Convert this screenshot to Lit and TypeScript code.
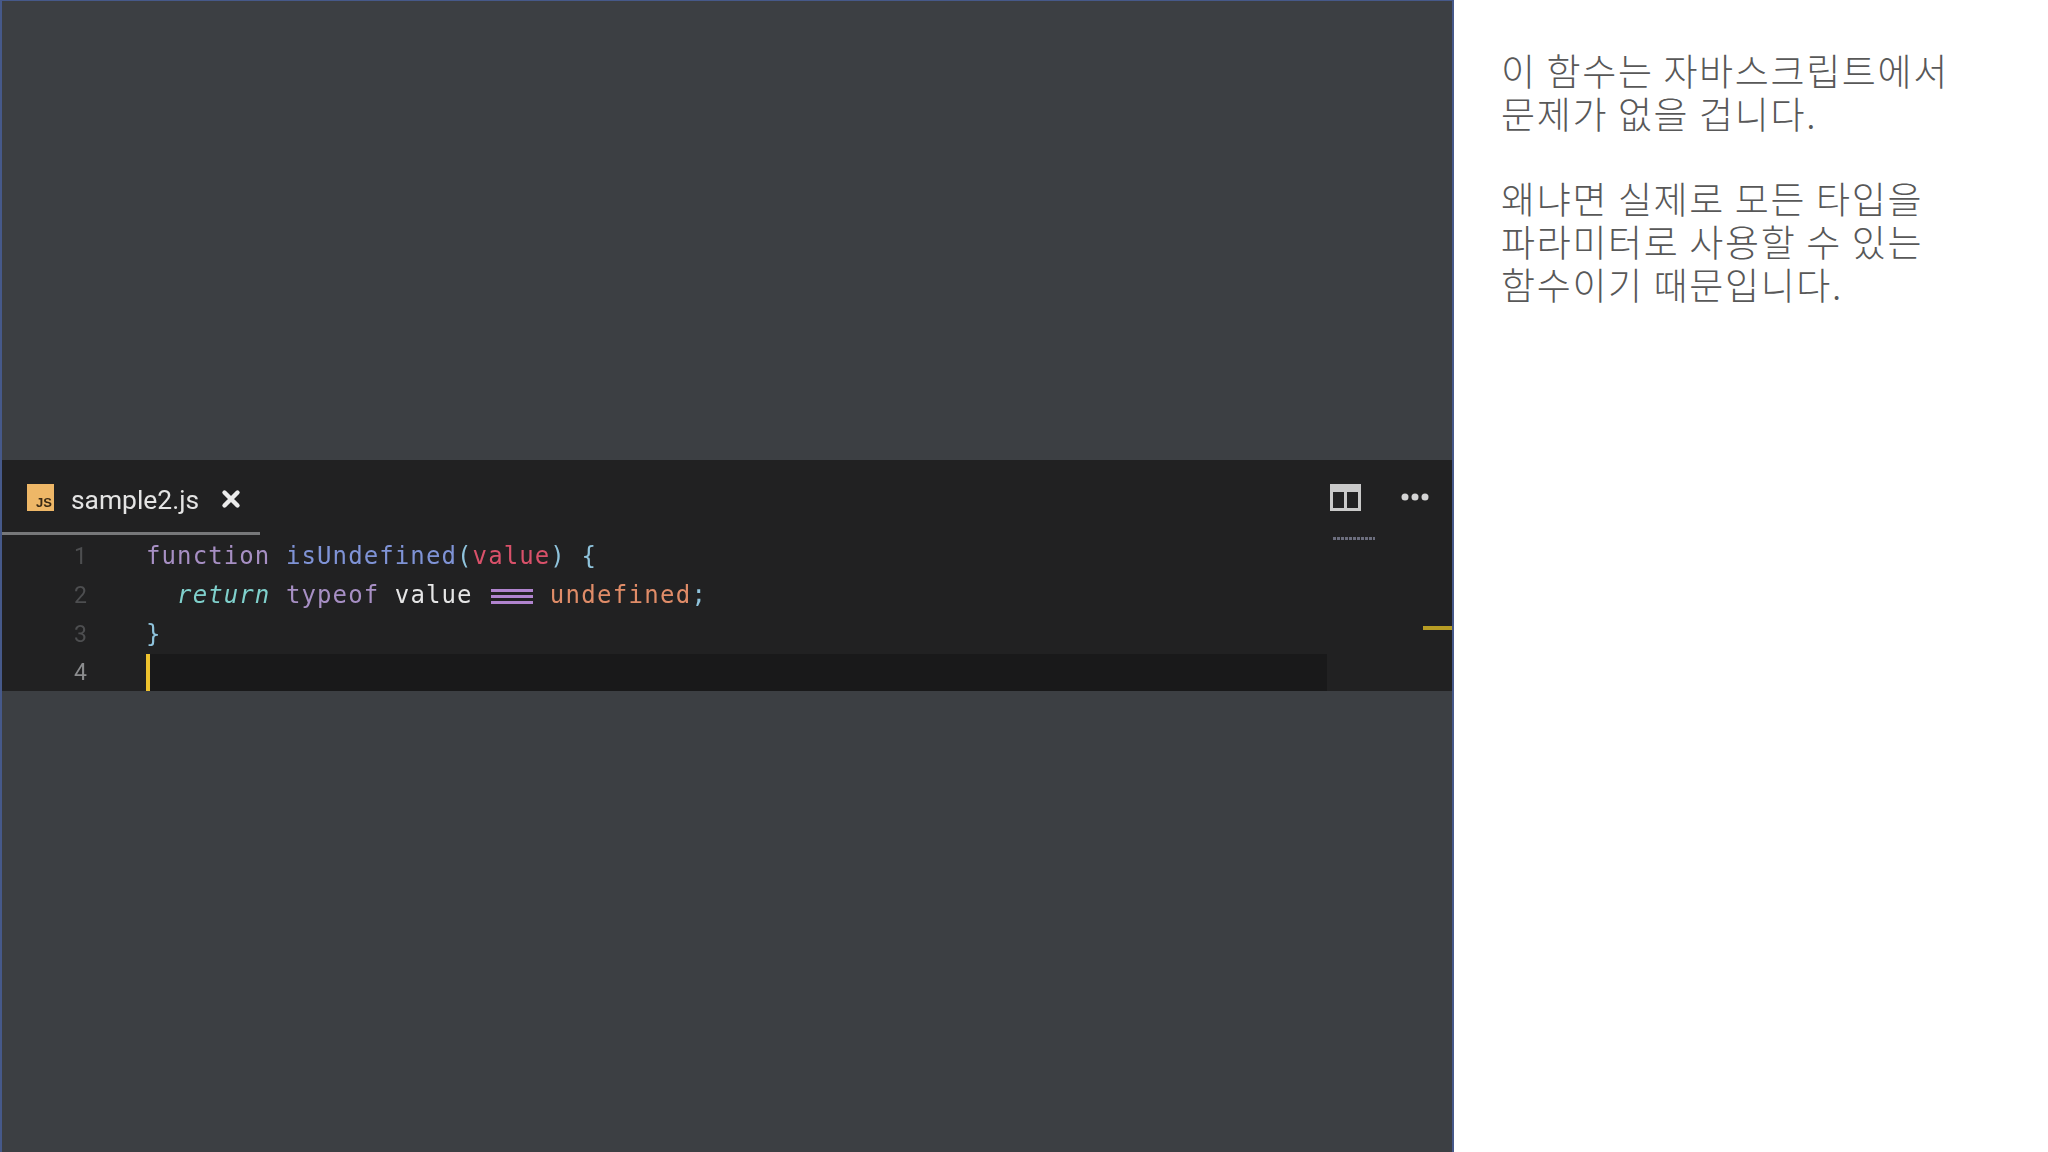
import { LitElement, html, css } from "lit";
import { customElement } from "lit/decorators.js";

@customElement("app-root")
export class AppRoot extends LitElement {
  static styles = css`
    :host { display: block; width: 2048px; height: 1152px; overflow: hidden; background: #fff; }
    .page { display: grid; grid-template-columns: 1454px 1fr; height: 1152px; }
    .video {
      display: flex; flex-direction: column; justify-content: flex-start;
      background: #3c3f43; border-left: 2px solid #46598a; border-right: 2px solid #46598a;
      border-top: 1px solid #46598a; box-sizing: border-box; height: 1152px;
    }
    .spacer { height: 459px; flex: none; }
    .editor { position: relative; height: 231px; flex: none; background: #212122; filter: blur(0.6px); }
    .tabbar { height: 73px; display: flex; align-items: center; padding: 6px 23px 0 25px; box-sizing: border-box; position: relative; }
    .jsicon {
      width: 27px; height: 27px; background: #eeb767; color: #3a2a14; flex: none;
      font: 700 13px "Liberation Sans", sans-serif; display: flex; align-items: flex-end; justify-content: flex-end;
      padding: 0 2px 1px 0; box-sizing: border-box; margin-top: -5px;
    }
    .tabname { font: 26.4px "Roboto", "Liberation Sans", sans-serif; color: #e4e4e4; margin-left: 17px; }
    .close { margin-left: 22px; display: flex; margin-top: -2px; }
    .tools { margin-left: auto; display: flex; align-items: center; gap: 40px; margin-top: -5px; }
    .underline { position: absolute; left: 0; top: 72px; width: 258px; height: 3px; background: #77787a; }
    .code { font: 24px/39px "DejaVu Sans Mono", monospace; letter-spacing: 1.1px; }
    .row { display: grid; grid-template-columns: 144px 1fr; height: 39px; margin-right: 125px; }
    .row.first { margin-top: 4px; }
    .num { text-align: right; padding-right: 58px; color: #4d4e50; font: 23px/39px "Roboto", sans-serif; }
    .row.active { background: #19191a; height: 37px; }
    .row.active .num { background: #212122; color: #8b8c8e; line-height: 37px; }
    .caret { border-left: 4px solid #eec22e; height: 37px; box-sizing: border-box; }
    .line { white-space: pre; }
    .kw { color: #a78fc4; } .fn { color: #7f93d6; } .pn { color: #8fc3dc; } .pa { color: #d9516a; }
    .ret { color: #7fd0cc; font-style: italic; } .id { color: #e6e6e6; } .un { color: #e08c68; letter-spacing: 1.3px; margin-left: 1px; }
    .eq { display: inline-block; width: 42px; height: 15px; margin: 0 0 0 3px; vertical-align: -1px;
      background: linear-gradient(#b184cf 0 3px, transparent 3px 6px, #b184cf 6px 9px, transparent 9px 12px, #b184cf 12px 15px); }
    .mini { position: absolute; left: 1331px; top: 77px; width: 42px; height: 3px; background: repeating-linear-gradient(90deg, #8b8ea4 0 3px, transparent 3px 4px); opacity: .7; }
    .mark { position: absolute; right: 0; top: 166px; width: 29px; height: 4px; background: #b79c24; }
    .notes { padding: 49px 0 0 47px; font: 300 37px/43px "Noto Sans CJK KR", "Noto Sans", sans-serif; color: #585858; }
    .notes p { margin: 0 0 42px; white-space: pre; letter-spacing: 1.65px; }
  `;

  render() {
    return html`<div class="page">
      <div class="video">
        <div class="spacer"></div>
        <div class="editor">
          <div class="tabbar">
            <span class="jsicon">JS</span>
            <span class="tabname">sample2.js</span>
            <span class="close"><svg width="20" height="20" viewBox="0 0 20 20"><path d="M3.5 3.5 16.5 16.5M16.5 3.5 3.5 16.5" stroke="#ececec" stroke-width="4.4" stroke-linecap="round"/></svg></span>
            <span class="tools">
              <svg width="31" height="27" viewBox="0 0 31 27"><path fill="#c9c9c9" fill-rule="evenodd" d="M0 0H31V27H0ZM3 8V24H14V8ZM17 8V24H28V8Z"/></svg>
              <svg width="28" height="8" viewBox="0 0 28 8"><circle cx="4" cy="4" r="3.5" fill="#d4d4d4"/><circle cx="14" cy="4" r="3.5" fill="#d4d4d4"/><circle cx="24" cy="4" r="3.5" fill="#d4d4d4"/></svg>
            </span>
            <div class="underline"></div>
          </div>
          <div class="code">
            <div class="row first"><span class="num">1</span><span class="line"><span class="kw">function</span> <span class="fn">isUndefined</span><span class="pn">(</span><span class="pa">value</span><span class="pn">) {</span></span></div>
            <div class="row"><span class="num">2</span><span class="line">  <span class="ret">return</span> <span class="kw">typeof</span> <span class="id">value</span> <span class="eq"></span> <span class="un">undefined</span><span class="pn">;</span></span></div>
            <div class="row"><span class="num">3</span><span class="pn">}</span></div>
            <div class="row active"><span class="num">4</span><span class="caret"></span></div>
          </div>
          <div class="mini"></div>
          <div class="mark"></div>
        </div>
      </div>
      <div class="notes">
        <p>이 함수는 자바스크립트에서
문제가 없을 겁니다.</p>
        <p>왜냐면 실제로 모든 타입을
파라미터로 사용할 수 있는
함수이기 때문입니다.</p>
      </div>
    </div>`;
  }
}
